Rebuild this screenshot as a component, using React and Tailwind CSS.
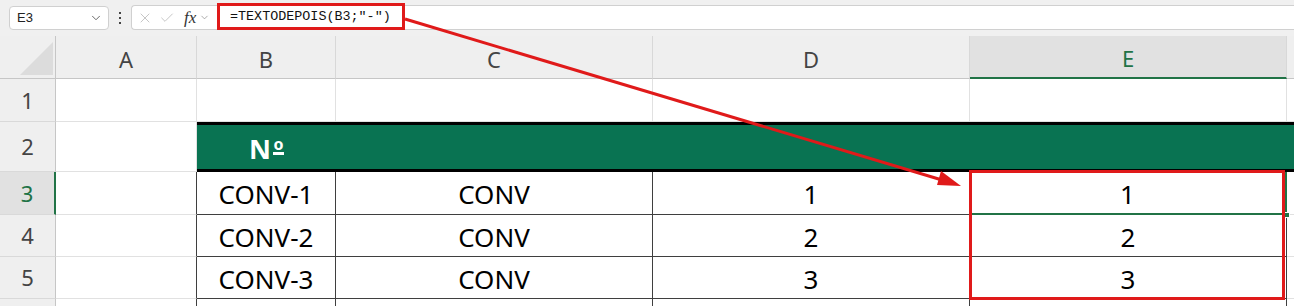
import React from 'react';
import { ChevronDown, X, Check } from 'lucide-react';

const font = { fontFamily: '"Noto Sans", "Liberation Sans", sans-serif' };

const dataRows = [
  { n: 3, b: 'CONV-1', c: 'CONV', d: '1', e: '1' },
  { n: 4, b: 'CONV-2', c: 'CONV', d: '2', e: '2' },
  { n: 5, b: 'CONV-3', c: 'CONV', d: '3', e: '3' },
];

const rowHeights = { 3: 'h-[43px]', 4: 'h-[42px]', 5: 'h-[42px]' };

const RowHead = ({ n, active }) => (
  <div
    className={`w-[56px] shrink-0 flex items-center justify-center border-b border-[#d9d9d9] text-[22px] ${
      active
        ? 'bg-[#e1e1e1] text-[#217346] border-r-2 border-r-[#217346]'
        : 'bg-[#efefef] text-[#444] border-r border-r-[#c6c6c6]'
    }`}
  >
    {n}
  </div>
);

const App = () => {
  return (
    <div className="relative w-[1294px] h-[306px] overflow-hidden bg-[#f0f0f0]" style={font}>
      {/* Formula bar */}
      <div className="flex h-[36px] items-start pt-[5px]">
        <div className="ml-[9px] mt-[1px] w-[100px] h-[24px] bg-white border border-[#d0d0d0] rounded-[4px] flex items-center justify-between pl-[7px] pr-[5px]">
          <span className="text-[13px] text-[#222]" style={{ fontFamily: '"Liberation Sans", sans-serif' }}>E3</span>
          <ChevronDown size={14} strokeWidth={1.5} className="text-[#555]" />
        </div>
        <div className="w-[22px] h-[26px] flex flex-col items-center justify-center gap-[3px]">
          <span className="w-[2px] h-[2px] bg-[#444]" />
          <span className="w-[2px] h-[2px] bg-[#444]" />
          <span className="w-[2px] h-[2px] bg-[#444]" />
        </div>
        <div className="w-[84px] h-[25px] bg-white border border-r-0 border-[#d0d0d0] rounded-l-[4px] flex items-center pl-[5px]">
          <X size={16} strokeWidth={1.2} className="text-[#b8b8b8]" />
          <Check size={16} strokeWidth={1.2} className="ml-[6px] text-[#b8b8b8]" />
          <span className="ml-[9px] text-[17px] italic text-[#333]" style={{ fontFamily: '"Liberation Serif", serif' }}>fx</span>
          <ChevronDown size={11} strokeWidth={1.5} className="ml-[3px] text-[#888]" />
        </div>
        <div className="flex-1 h-[25px] bg-white border-y border-[#d0d0d0] flex items-center pl-[15px]">
          <span className="text-[13.4px] text-[#111]" style={{ fontFamily: '"Liberation Mono", monospace' }}>=TEXTODEPOIS(B3;"-")</span>
        </div>
      </div>

      {/* Column headers */}
      <div className="flex h-[43px] bg-[#efefef] text-[22px] text-[#444]">
        <div className="relative w-[56px] shrink-0 border-r border-b border-[#c6c6c6]">
          <svg className="absolute left-0 top-0" width="56" height="43">
            <polygon points="20,39 53,6 53,39" fill="#dcdcdc" />
          </svg>
        </div>
        <div className="w-[141px] shrink-0 border-r border-[#d8d8d8] border-b border-b-[#c6c6c6] flex items-center justify-center pt-[4px]">A</div>
        <div className="w-[139px] shrink-0 border-r border-[#d8d8d8] border-b border-b-[#c6c6c6] flex items-center justify-center pt-[4px]">B</div>
        <div className="w-[317px] shrink-0 border-r border-[#d8d8d8] border-b border-b-[#c6c6c6] flex items-center justify-center pt-[4px]">C</div>
        <div className="w-[317px] shrink-0 border-r border-[#d8d8d8] border-b border-b-[#c6c6c6] flex items-center justify-center pt-[4px]">D</div>
        <div className="w-[317px] shrink-0 bg-[#e1e1e1] text-[#217346] border-r border-[#d8d8d8] border-b-2 border-b-[#217346] flex items-center justify-center pt-[4px]">E</div>
        <div className="flex-1 border-b border-[#c6c6c6]" />
      </div>

      {/* Row 1 */}
      <div className="flex h-[43px] bg-white">
        <RowHead n={1} />
        <div className="w-[141px] shrink-0 border-r border-b border-[#e1e1e1]" />
        <div className="w-[139px] shrink-0 border-r border-b border-[#e1e1e1]" />
        <div className="w-[317px] shrink-0 border-r border-b border-[#e1e1e1]" />
        <div className="w-[317px] shrink-0 border-r border-b border-[#e1e1e1]" />
        <div className="w-[317px] shrink-0 border-r border-b border-[#e1e1e1]" />
        <div className="flex-1 border-b border-[#e1e1e1]" />
      </div>

      {/* Row 2 - header band */}
      <div className="flex h-[50px] bg-white">
        <RowHead n={2} />
        <div className="w-[141px] shrink-0 border-r border-b border-[#e1e1e1]" />
        <div className="flex-1 flex bg-[#097352] border-y-[3px] border-black">
          <div className="w-[139px] flex items-center justify-center font-bold text-white pt-[2px]">
            <div className="flex items-start">
              <span className="text-[27px] leading-none">N</span>
              <span className="ml-[2px] mt-[3px] flex flex-col items-center">
                <span className="text-[16px] leading-[12px]">o</span>
                <span className="w-[11px] h-[3px] bg-white mt-[2px]" />
              </span>
            </div>
          </div>
        </div>
      </div>

      {/* Data rows */}
      {dataRows.map((r) => (
        <div key={r.n} className={`flex ${rowHeights[r.n]} bg-white text-[26px] text-black`}>
          <RowHead n={r.n} active={r.n === 3} />
          <div className="w-[141px] shrink-0 border-b border-b-[#e1e1e1] border-r border-r-[#3f3f3f]" />
          <div className="w-[139px] shrink-0 border-r border-b border-[#3f3f3f] flex items-center justify-center pt-[3px]">{r.b}</div>
          <div className="w-[317px] shrink-0 border-r border-b border-[#3f3f3f] flex items-center justify-center pt-[3px]">{r.c}</div>
          <div className="w-[317px] shrink-0 border-r border-b border-[#3f3f3f] flex items-center justify-center pt-[3px]">{r.d}</div>
          <div
            className={`w-[317px] shrink-0 flex items-center justify-center pt-[3px] ${
              r.n === 3 ? 'border-r-2 border-b-2 border-[#217346]' : 'border-r border-b border-[#3f3f3f]'
            }`}
          >
            {r.e}
          </div>
          <div className="flex-1 border-b border-[#e1e1e1]" />
        </div>
      ))}

      {/* Row 6 (partial) */}
      <div className="flex h-[7px] bg-white">
        <div className="w-[56px] shrink-0 bg-[#efefef] border-r border-[#c6c6c6]" />
        <div className="w-[141px] shrink-0 border-r border-r-[#3f3f3f]" />
        <div className="w-[139px] shrink-0 border-r border-[#3f3f3f]" />
        <div className="w-[317px] shrink-0 border-r border-[#3f3f3f]" />
        <div className="w-[317px] shrink-0 border-r border-[#3f3f3f]" />
        <div className="w-[317px] shrink-0 border-r border-[#3f3f3f]" />
        <div className="flex-1" />
      </div>

      {/* Annotations */}
      <div className="absolute left-[217px] top-[3px] w-[188px] h-[27px] border-[3px] border-[#e01a1a]" />
      <div className="absolute left-[1284px] top-[212px] w-[6px] h-[6px] bg-[#217346] border border-white" />
      <div className="absolute left-[969px] top-[170px] w-[316px] h-[130px] border-[3px] border-[#e01a1a]" />
      <svg className="absolute left-0 top-0 pointer-events-none" width="1294" height="306">
        <line x1="405" y1="19" x2="942" y2="180" stroke="#e01a1a" strokeWidth="3" />
        <polygon points="961,186 941,171 937,185" fill="#e01a1a" />
      </svg>
    </div>
  );
};

export default App;
